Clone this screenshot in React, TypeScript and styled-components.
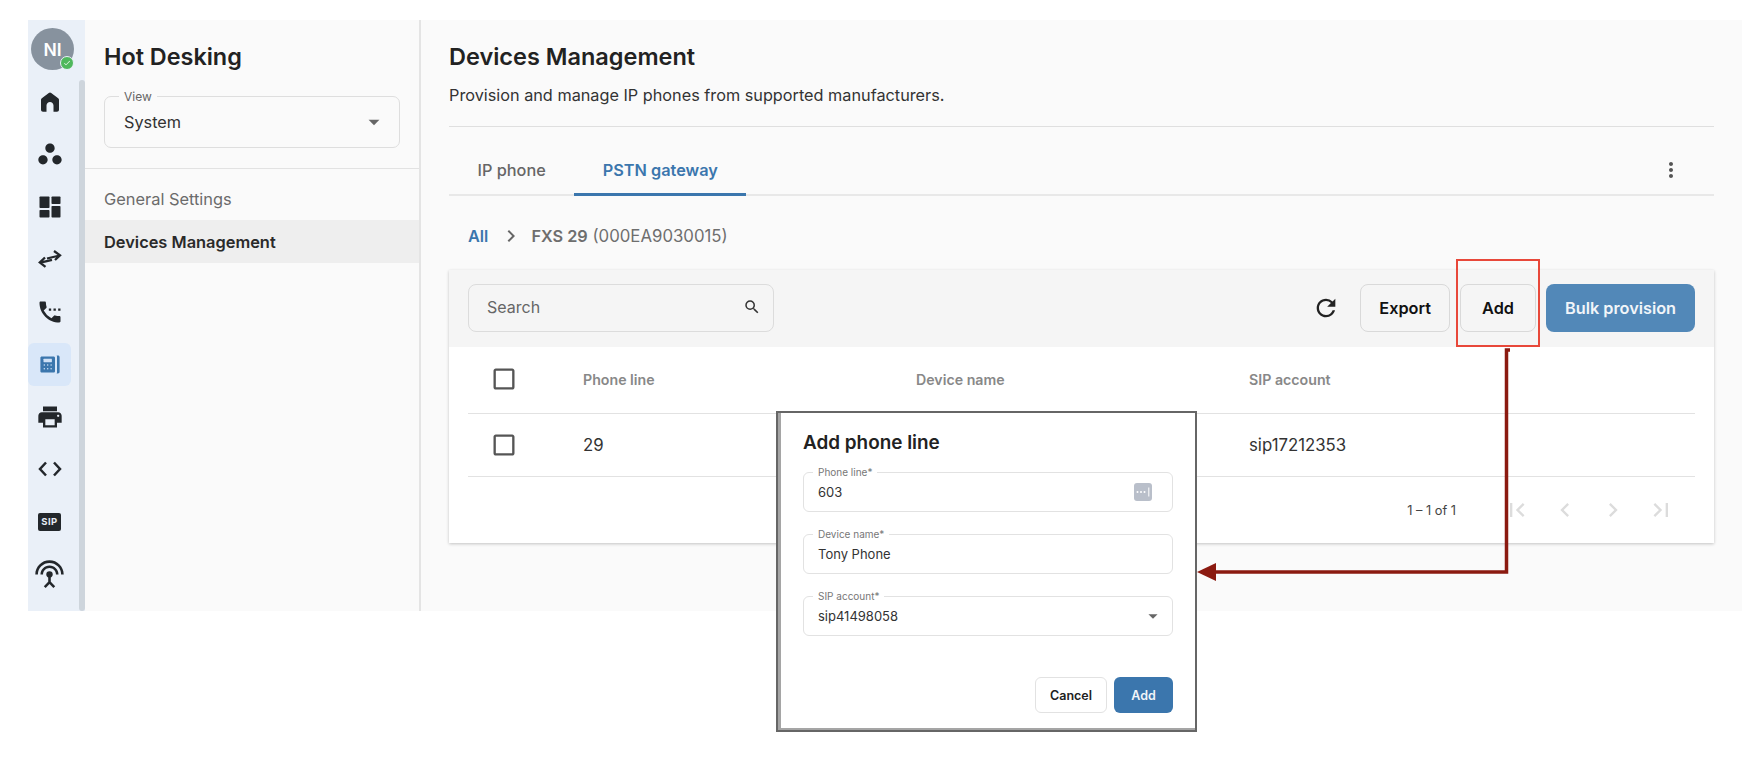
import React from 'react'
import styled, { createGlobalStyle } from 'styled-components'
import {
  MdArrowDropDown,
  MdCheck,
  MdCheckBoxOutlineBlank,
  MdChevronLeft,
  MdChevronRight,
  MdFirstPage,
  MdLastPage,
  MdMoreVert,
  MdPrint,
  MdRefresh,
  MdSearch,
  MdSettingsInputAntenna,
  MdSettingsPhone,
  MdWorkspaces,
} from 'react-icons/md'

const GlobalStyle = createGlobalStyle`
  html, body {
    margin: 0;
    background: #fff;
    font-family: Inter, "Liberation Sans", sans-serif;
    color: #222;
  }
  * { box-sizing: border-box; }
`

const HomeIcon = () => (
  <svg width="24" height="24" viewBox="0 0 24 24" fill="#23272b">
    <path d="M10.800 2.900a2 2 0 0 1 2.400 0l7 5.300c.5.4.8 1 .8 1.600v10c0 1.100-.9 2-2 2h-3.500v-6.300c0-1.900-1.600-3.500-3.500-3.500s-3.500 1.600-3.500 3.500v6.300H5c-1.100 0-2-.9-2-2v-10c0-.6.3-1.200.8-1.600z" />
  </svg>
)

const DashIcon = () => (
  <svg width="22" height="22" viewBox="0 0 22 22" fill="#23272b">
    <rect x="0.500" y="0.500" width="10" height="11.500" rx=".8" />
    <rect x="0.500" y="14" width="10" height="7.500" rx=".8" />
    <rect x="12.500" y="0.500" width="9" height="7.500" rx=".8" />
    <rect x="12.500" y="10" width="9" height="11.500" rx=".8" />
  </svg>
)

const SlantedArrows = () => (
  <svg width="24" height="24" viewBox="0 0 24 24" fill="none" stroke="#23272b" strokeWidth="2.300">
    <path d="M9 11.500L21.500 8.500M16 4l6 4.300-5 4.700" />
    <path d="M14 12.800L2.500 15.700M7 10.500l-5.200 5 5.700 4.300" />
  </svg>
)

const CodeIcon = () => (
  <svg width="24" height="24" viewBox="0 0 24 24" fill="none" stroke="#23272b" strokeWidth="2.500">
    <path d="M8 5.500L2 12l6 6.500" />
    <path d="M16 5.500l6 6.500-6 6.500" />
  </svg>
)

const DeskPhone = () => (
  <svg width="24" height="24" viewBox="0 0 24 24" fill="#3b76ad">
    <path d="M2.400 5.800c0-.8.600-1.400 1.400-1.400h11.800c.8 0 1.400.6 1.400 1.400v13.400c0 .8-.6 1.400-1.400 1.400H3.800c-.8 0-1.400-.6-1.400-1.400z" />
    <path d="M18.600 3.500h1.300c1 0 1.700.7 1.700 1.700v14.600c0 1-.7 1.700-1.700 1.700h-1.300c.3-.4.4-.8.4-1.300V4.800c0-.5-.1-.9-.4-1.300z" />
    <g fill="#cfe0f5">
      <rect x="5.500" y="6.800" width="8.400" height="3.400" rx=".4" />
      <circle cx="6.300" cy="13" r=".75" />
      <circle cx="9.700" cy="13" r=".75" />
      <circle cx="13.100" cy="13" r=".75" />
      <circle cx="6.300" cy="16.800" r=".75" />
      <circle cx="9.700" cy="16.800" r=".75" />
      <circle cx="13.100" cy="16.800" r=".75" />
    </g>
  </svg>
)

const PinKey = () => (
  <svg width="18" height="18" viewBox="0 0 18 18">
    <rect width="18" height="18" rx="3" fill="#b9bfca" />
    <g fill="#fff">
      <circle cx="3.500" cy="9" r="1" />
      <circle cx="7" cy="9" r="1" />
      <circle cx="10.500" cy="9" r="1" />
      <rect x="14.300" y="4.500" width="1" height="9" />
    </g>
  </svg>
)

function SipBadgeIcon() {
  return <SipBadge>SIP</SipBadge>
}

const navIcons = [
  <HomeIcon />,
  <MdWorkspaces size={28} />,
  <DashIcon />,
  <SlantedArrows />,
  <MdSettingsPhone size={28} />,
  <DeskPhone />,
  <MdPrint size={28} />,
  <CodeIcon />,
  <SipBadgeIcon />,
  <MdSettingsInputAntenna size={31} />,
]

const App: React.FC = () => {
  return (
    <Page>
      <GlobalStyle />
      <Frame>
        <Rail>
          <RailColumn>
            <Avatar>
              NI
              <StatusDot>
                <MdCheck size={8} color="#fff" />
              </StatusDot>
            </Avatar>
            {navIcons.map((icon, i) => (
              <NavItem key={i} $active={i === 5}>
                {icon}
              </NavItem>
            ))}
          </RailColumn>
          <RailScroll />
        </Rail>

        <SidePanel>
          <SideHead>
            <SideTitle>Hot Desking</SideTitle>
            <ViewSelect>
              <ViewLabel>View</ViewLabel>
              <span>System</span>
              <MdArrowDropDown size={26} color="#666" />
            </ViewSelect>
          </SideHead>
          <SideLink>General Settings</SideLink>
          <SideLink $active>Devices Management</SideLink>
        </SidePanel>

        <Main>
          <PageTitle>Devices Management</PageTitle>
          <PageHint>Provision and manage IP phones from supported manufacturers.</PageHint>

          <Tabs>
            <Tab>IP phone</Tab>
            <Tab $active>PSTN gateway</Tab>
            <TabMenu>
              <MdMoreVert size={24} color="#555" />
            </TabMenu>
          </Tabs>

          <Crumbs>
            <CrumbLink>All</CrumbLink>
            <MdChevronRight size={24} color="#666" />
            <CrumbText>
              <b>FXS 29</b> (000EA9030015)
            </CrumbText>
          </Crumbs>

          <Card>
            <Toolbar>
              <SearchBox>
                <span>Search</span>
                <MdSearch size={18} color="#333" />
              </SearchBox>
              <ToolbarActions>
                <RefreshIcon>
                  <MdRefresh size={28} color="#222" />
                </RefreshIcon>
                <OutlineButton>Export</OutlineButton>
                <AddWrap>
                  <OutlineButton>Add</OutlineButton>
                  <Highlight />
                </AddWrap>
                <BulkButton>Bulk provision</BulkButton>
              </ToolbarActions>
            </Toolbar>

            <TableBody>
              <HeadRow>
                <CheckCell>
                  <MdCheckBoxOutlineBlank size={28} color="#555" />
                </CheckCell>
                <span>Phone line</span>
                <span>Device name</span>
                <span>SIP account</span>
              </HeadRow>
              <DataRow>
                <CheckCell>
                  <MdCheckBoxOutlineBlank size={28} color="#555" />
                </CheckCell>
                <span>29</span>
                <span />
                <span>sip17212353</span>
              </DataRow>
              <Pager>
                <PagerCount>1 – 1 of 1</PagerCount>
                <PagerIcons>
                  <MdFirstPage size={28} />
                  <MdChevronLeft size={28} />
                  <MdChevronRight size={28} />
                  <MdLastPage size={28} />
                </PagerIcons>
              </Pager>
            </TableBody>
          </Card>
        </Main>
      </Frame>

      <ArrowOverlay width="1762" height="766" viewBox="0 0 1762 766">
        <path d="M1510 350h-3.500V572H1212" fill="none" stroke="#8b1a10" strokeWidth="3.500" />
        <polygon points="1197,572 1216,563 1216,581" fill="#8b1a10" />
      </ArrowOverlay>

      <Modal>
        <ModalTitle>Add phone line</ModalTitle>
        <FieldStack>
          <Field>
            <FieldLabel>Phone line*</FieldLabel>
            <span>603</span>
            <PinKey />
          </Field>
          <Field>
            <FieldLabel>Device name*</FieldLabel>
            <span>Tony Phone</span>
          </Field>
          <Field>
            <FieldLabel>SIP account*</FieldLabel>
            <span>sip41498058</span>
            <FieldCaret>
              <MdArrowDropDown size={22} color="#666" />
            </FieldCaret>
          </Field>
        </FieldStack>
        <ModalActions>
          <CancelButton>Cancel</CancelButton>
          <ConfirmButton>Add</ConfirmButton>
        </ModalActions>
      </Modal>
    </Page>
  )
}

const Page = styled.div`
  position: relative;
  width: 1762px;
  height: 766px;
  padding: 20px 0 0 28px;
  overflow: hidden;
`

const Frame = styled.div`
  display: flex;
  width: 1714px;
  height: 591px;
  background: #fafafa;
`

const Rail = styled.nav`
  width: 57px;
  display: flex;
  background: #eaf0f8;
`

const RailColumn = styled.div`
  width: 51px;
  display: flex;
  flex-direction: column;
  padding-top: 8px;
`

const RailScroll = styled.div`
  width: 6px;
  margin-top: 60px;
  border-radius: 3px;
  background: #ced5dc;
`

const Avatar = styled.div`
  position: relative;
  width: 43px;
  height: 42px;
  margin: 0 0 10px 3px;
  border-radius: 50%;
  background: #87929e;
  color: #fff;
  font-size: 17.500px;
  font-weight: 600;
  display: flex;
  align-items: center;
  justify-content: center;
`

const StatusDot = styled.span`
  position: absolute;
  right: 0;
  bottom: 0;
  width: 14px;
  height: 14px;
  border-radius: 50%;
  background: #4fb85c;
  border: 1.5px solid #eaf0f8;
  display: flex;
  align-items: center;
  justify-content: center;
`

const NavItem = styled.div<{ $active?: boolean }>`
  width: 43px;
  height: 43px;
  flex: none;
  margin-bottom: 9.5px;
  border-radius: 6px;
  display: flex;
  align-items: center;
  justify-content: center;
  color: #23272b;
  background: ${(props) => (props.$active ? '#d9e7f9' : 'transparent')};
`

const SipBadge = styled.span`
  width: 23px;
  height: 18px;
  border-radius: 2px;
  background: #23272b;
  color: #e6ebf2;
  font-size: 9.500px;
  font-weight: 700;
  letter-spacing: 0.5px;
  display: flex;
  align-items: center;
  justify-content: center;
`

const SidePanel = styled.aside`
  width: 336px;
  border-right: 2px solid #e4e4e4;
`

const SideHead = styled.div`
  padding: 21px 19px 20px 19px;
  border-bottom: 1px solid #e2e2e2;
  margin-bottom: 8px;
`

const SideTitle = styled.h2`
  margin: 0 0 23px;
  font-size: 23.400px;
  line-height: 32px;
  font-weight: 600;
  color: #222;
`

const ViewSelect = styled.div`
  position: relative;
  height: 52px;
  padding: 0 12px 0 19px;
  border: 1px solid #dedede;
  border-radius: 7px;
  display: flex;
  align-items: center;
  justify-content: space-between;
  font-size: 16.300px;
  color: #333;
`

const ViewLabel = styled.span`
  position: absolute;
  left: 14px;
  top: -8px;
  padding: 0 5px;
  background: #fafafa;
  font-size: 12px;
  line-height: 15px;
  color: #666;
`

const SideLink = styled.div<{ $active?: boolean }>`
  height: 43px;
  padding-left: 19px;
  display: flex;
  align-items: center;
  font-size: 16.400px;
  font-weight: ${(props) => (props.$active ? 600 : 400)};
  color: ${(props) => (props.$active ? '#2a2a2a' : '#6b6b6b')};
  background: ${(props) => (props.$active ? '#eeeeee' : 'transparent')};
`

const Main = styled.main`
  flex: 1;
  padding: 0 28px 0 28px;
`

const PageTitle = styled.h1`
  margin: 0;
  padding-top: 21px;
  font-size: 23.500px;
  line-height: 32px;
  font-weight: 600;
  color: #222;
`

const PageHint = styled.p`
  margin: 11px 0 0;
  padding-bottom: 20px;
  font-size: 16.250px;
  line-height: 22px;
  color: #333;
  border-bottom: 1px solid #dfdfdf;
`

const Tabs = styled.div`
  display: flex;
  align-items: stretch;
  height: 69px;
  padding-top: 18px;
  border-bottom: 2px solid #e8e8e8;
`

const Tab = styled.div<{ $active?: boolean }>`
  padding: 2px 28.500px 0;
  margin-bottom: -2px;
  display: flex;
  align-items: center;
  font-size: 16.300px;
  font-weight: ${(props) => (props.$active ? 600 : 500)};
  color: ${(props) => (props.$active ? '#3b76ad' : '#666')};
  border-bottom: 3px solid ${(props) => (props.$active ? '#3b76ad' : 'transparent')};
`

const TabMenu = styled.div`
  margin-left: auto;
  padding-right: 31px;
  display: flex;
  align-items: center;
`

const Crumbs = styled.div`
  height: 74px;
  padding: 5px 0 0 19px;
  display: flex;
  align-items: center;
  gap: 8px;
  font-size: 16.300px;
`

const CrumbLink = styled.span`
  font-weight: 600;
  color: #3b76ad;
  margin-right: 3px;
`

const CrumbText = styled.span`
  color: #6e6e6e;
  font-size: 16.800px;
  b {
    font-size: 16.300px;
    font-weight: 600;
  }
`

const Card = styled.section`
  background: #fff;
  box-shadow: 0 1px 3px rgba(0, 0, 0, 0.22);
`

const Toolbar = styled.div`
  height: 77px;
  padding: 14px 19px 15px 19px;
  display: flex;
  align-items: flex-start;
  justify-content: space-between;
  background: #f5f5f5;
`

const SearchBox = styled.div`
  width: 306px;
  height: 48px;
  padding: 0 12px 2px 18px;
  display: flex;
  align-items: center;
  justify-content: space-between;
  border: 1px solid #dcdcdc;
  border-radius: 8px;
  font-size: 16px;
  color: #666;
`

const ToolbarActions = styled.div`
  display: flex;
  align-items: center;
  gap: 10px;
`

const RefreshIcon = styled.div`
  margin-right: 10px;
  display: flex;
`

const OutlineButton = styled.button`
  height: 48px;
  padding: 0 18px;
  min-width: 76px;
  border: 1px solid #d9d9d9;
  border-radius: 8px;
  background: transparent;
  font: 600 16.300px Inter, "Liberation Sans", sans-serif;
  color: #111;
`

const AddWrap = styled.div`
  position: relative;
  display: flex;
`

const Highlight = styled.div`
  position: absolute;
  inset: -25px -4px -15px -4px;
  border: 2px solid #e8483a;
  pointer-events: none;
`

const BulkButton = styled.button`
  width: 149px;
  height: 48px;
  border: 0;
  border-radius: 8px;
  background: #5288b8;
  font: 600 16.300px Inter, "Liberation Sans", sans-serif;
  color: #f1f5f9;
`

const TableBody = styled.div`
  padding: 0 19px;
`

const HeadRow = styled.div`
  height: 67px;
  padding-bottom: 2px;
  display: grid;
  grid-template-columns: 115px 333px 333px 1fr;
  align-items: center;
  border-bottom: 1px solid #e2e2e2;
  font-size: 14.200px;
  font-weight: 600;
  color: #888;
`

const DataRow = styled.div`
  height: 63px;
  display: grid;
  grid-template-columns: 115px 333px 333px 1fr;
  align-items: center;
  border-bottom: 1px solid #e2e2e2;
  font-size: 16.800px;
  color: #333;
`

const CheckCell = styled.div`
  padding-left: 22px;
  display: flex;
`

const Pager = styled.div`
  height: 66px;
  display: flex;
  align-items: center;
  justify-content: flex-end;
  padding-right: 20px;
`

const PagerCount = styled.span`
  font-size: 12.800px;
  color: #444;
  margin-right: 47px;
`

const PagerIcons = styled.div`
  display: flex;
  gap: 20px;
  color: #dcdcdc;
`

const ArrowOverlay = styled.svg`
  position: absolute;
  left: 0;
  top: 0;
  pointer-events: none;
`

const Modal = styled.div`
  position: absolute;
  left: 776px;
  top: 411px;
  width: 421px;
  height: 321px;
  padding: 17px 22px 0 25px;
  background: #fff;
  border: 2px solid #666;
  box-shadow: inset 3px 0 0 #a5a5a5, inset 0 -2px 0 #a5a5a5;
`

const ModalTitle = styled.h3`
  margin: 0 0 16px;
  font-size: 18.900px;
  line-height: 26px;
  font-weight: 600;
  color: #222;
`

const FieldStack = styled.div`
  display: flex;
  flex-direction: column;
  gap: 22px;
`

const Field = styled.div`
  position: relative;
  height: 40px;
  padding: 0 20px 0 14px;
  display: flex;
  align-items: center;
  justify-content: space-between;
  border: 1px solid #e2e2e2;
  border-radius: 6px;
  font-size: 13px;
  color: #333;
`

const FieldLabel = styled.span`
  position: absolute;
  left: 9px;
  top: -7px;
  padding: 0 5px;
  background: #fff;
  font-size: 10px;
  line-height: 13px;
  color: #777;
`

const FieldCaret = styled.span`
  display: flex;
  margin-right: -12px;
`

const ModalActions = styled.div`
  margin-top: 41px;
  display: flex;
  justify-content: flex-end;
  gap: 7px;
`

const CancelButton = styled.button`
  width: 72px;
  height: 36px;
  border: 1px solid #e2e2e2;
  border-radius: 6px;
  background: #fff;
  font: 600 12.500px Inter, "Liberation Sans", sans-serif;
  color: #222;
`

const ConfirmButton = styled.button`
  width: 59px;
  height: 36px;
  border: 0;
  border-radius: 6px;
  background: #3b76ad;
  font: 600 12.500px Inter, "Liberation Sans", sans-serif;
  color: #f1f5f9;
`

export default App
